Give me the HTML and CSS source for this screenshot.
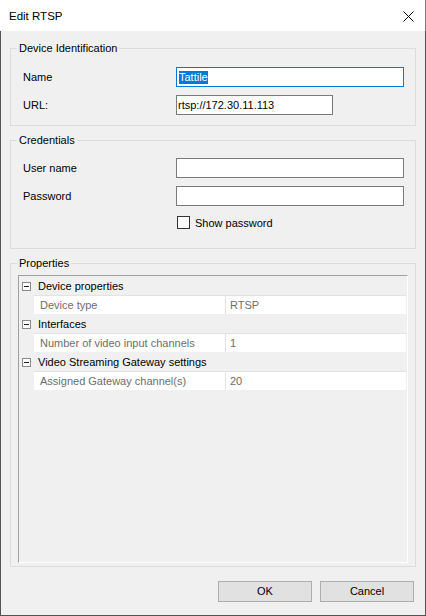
FILE: index.html
```html
<!DOCTYPE html>
<html>
<head>
<meta charset="utf-8">
<link rel="stylesheet" href="styles.css">
</head>
<body>
<div class="window">
  <div class="titlebar">
    <span class="title">Edit RTSP</span>
    <svg class="close" width="11" height="11" viewBox="0 0 11 11"><path d="M0.5 0.5 L10.5 10.5 M10.5 0.5 L0.5 10.5" stroke="#000" stroke-width="1" fill="none"/></svg>
  </div>
  <div class="content">
    <fieldset class="group g-ident">
      <legend>Device Identification</legend>
      <div class="row"><span class="lbl">Name</span><div class="tb tb-wide tb-focus"><span class="sel">Tattile</span></div></div>
      <div class="row gap"><span class="lbl">URL:</span><div class="tb tb-url">rtsp://172.30.11.113</div></div>
    </fieldset>
    <fieldset class="group g-cred">
      <legend>Credentials</legend>
      <div class="row"><span class="lbl">User name</span><div class="tb tb-wide"></div></div>
      <div class="row gap"><span class="lbl">Password</span><div class="tb tb-wide"></div></div>
      <div class="check-row"><span class="checkbox"></span><span>Show password</span></div>
    </fieldset>
    <fieldset class="group g-props">
      <legend>Properties</legend>
      <div class="pgrid">
        <div class="cat"><svg class="minus" width="9" height="9" viewBox="0 0 9 9"><rect x="0.5" y="0.5" width="8" height="8" fill="#fff" stroke="#8a8a8a"/><path d="M2 4.5 H7" stroke="#1e1e1e"/></svg><span>Device properties</span></div>
        <div class="prop"><span class="indent"></span><span class="plabel">Device type</span><span class="pvalue">RTSP</span></div>
        <div class="cat"><svg class="minus" width="9" height="9" viewBox="0 0 9 9"><rect x="0.5" y="0.5" width="8" height="8" fill="#fff" stroke="#8a8a8a"/><path d="M2 4.5 H7" stroke="#1e1e1e"/></svg><span>Interfaces</span></div>
        <div class="prop"><span class="indent"></span><span class="plabel">Number of video input channels</span><span class="pvalue">1</span></div>
        <div class="cat"><svg class="minus" width="9" height="9" viewBox="0 0 9 9"><rect x="0.5" y="0.5" width="8" height="8" fill="#fff" stroke="#8a8a8a"/><path d="M2 4.5 H7" stroke="#1e1e1e"/></svg><span>Video Streaming Gateway settings</span></div>
        <div class="prop"><span class="indent"></span><span class="plabel">Assigned Gateway channel(s)</span><span class="pvalue">20</span></div>
      </div>
    </fieldset>
    <div class="buttons">
      <div class="btn">OK</div>
      <div class="btn">Cancel</div>
    </div>
  </div>
</div>
</body>
</html>
```
FILE: styles.css
```css
html, body {
  margin: 0;
  padding: 0;
  background: #f0f0f0;
}
body {
  font-family: "Liberation Sans", Arial, sans-serif;
  font-size: 11px;
  color: #000;
}
.window {
  width: 426px;
  height: 616px;
  display: flex;
  flex-direction: column;
  box-sizing: border-box;
}
.titlebar {
  height: 31px;
  flex: none;
  background: #fff;
  display: flex;
  align-items: center;
  justify-content: space-between;
  padding: 0 11px 0 9px;
  border-right: 1px solid #7a7a7a;
}
.title {
  font-size: 11.5px;
  line-height: 14px;
  padding-top: 1px;
}
.close {
  display: block;
  margin-top: 1px;
}
.content {
  flex: 1;
  background: #f0f0f0;
  border: 1px solid #55554f;
  border-top: none;
  padding: 11px 9px 0 9px;
  display: flex;
  flex-direction: column;
}
.group {
  margin: 0;
  min-width: 0;
  border: 1px solid #dcdcdc;
  padding: 12px 8px 10px 12px;
}
.group legend {
  margin-left: -6px;
  padding: 0 2px;
  line-height: 13px;
  height: 13px;
  font-size: 11px;
}
.g-cred {
  margin-top: 8px;
  padding-top: 11px;
  padding-bottom: 19px;
}
.g-props {
  margin-top: 8px;
  padding: 5px 7px 3px 7px;
}
.g-props legend {
  margin-left: -1px;
}
.row {
  display: flex;
  align-items: center;
  height: 20px;
}
.row.gap {
  margin-top: 8px;
}
.lbl {
  width: 153px;
  flex: none;
}
.tb {
  box-sizing: border-box;
  height: 20px;
  border: 1px solid #7a7a7a;
  background: #fff;
  line-height: 18px;
  padding-left: 1px;
  white-space: nowrap;
}
.tb-wide { width: 228px; }
.tb-url { width: 157px; }
.tb-focus {
  border-color: #0078d7;
  padding-left: 2px;
}
.sel {
  display: inline-block;
  background: #0078d7;
  color: #fff;
  line-height: 13px;
  vertical-align: middle;
  margin-top: -2px;
}
.check-row {
  display: flex;
  align-items: center;
  margin-top: 10px;
  margin-left: 154px;
  height: 13px;
}
.checkbox {
  box-sizing: border-box;
  width: 13px;
  height: 13px;
  border: 1px solid #333;
  background: #fff;
  margin-right: 5px;
}
.pgrid {
  box-sizing: border-box;
  height: 288px;
  border-top: 1px solid #a0a0a0;
  border-left: 1px solid #a0a0a0;
  border-right: 1px solid #fff;
  border-bottom: 1px solid #fff;
  background: #f0f0f0;
}
.cat {
  height: 19px;
  box-sizing: border-box;
  display: flex;
  align-items: center;
  padding-top: 1px;
  line-height: 18px;
}
.minus {
  display: block;
  margin: 1px 7px 0 3px;
}
.prop {
  height: 19px;
  display: flex;
  color: #6d6d6d;
}
.indent {
  width: 15px;
  flex: none;
}
.plabel, .pvalue {
  box-sizing: border-box;
  height: 19px;
  background: #fff;
  border-top: 1px solid #e3e3e3;
  line-height: 18px;
  white-space: nowrap;
}
.plabel {
  width: 192px;
  border-right: 1px solid #e3e3e3;
  padding-left: 6px;
}
.pvalue {
  width: 180px;
  padding-left: 4px;
}
.buttons {
  display: flex;
  justify-content: flex-end;
  gap: 8px;
  margin-top: 14px;
  padding-right: 2px;
}
.btn {
  box-sizing: border-box;
  width: 94px;
  height: 21px;
  background: #e1e1e1;
  border: 1px solid #adadad;
  text-align: center;
  line-height: 19px;
}
```
